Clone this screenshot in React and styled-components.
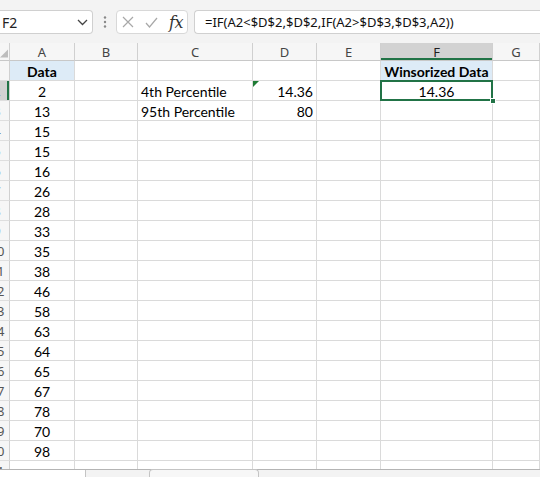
import React from "react";
import styled, { createGlobalStyle } from "styled-components";

const Global = createGlobalStyle`
  html, body { margin: 0; padding: 0; background: #f3f3f3; }
  * { box-sizing: border-box; }
`;

const Page = styled.div`
  width: 540px;
  height: 477px;
  overflow: hidden;
  display: flex;
  flex-direction: column;
  background: #f3f3f3;
`;

const FormulaBar = styled.div`
  height: 43px;
  flex: none;
  display: flex;
  align-items: center;
  gap: 0;
  padding-top: 1px;
`;

const NameBox = styled.div`
  width: 93px;
  height: 24px;
  background: #fff;
  border: 1px solid #d0d0d0;
  border-left: none;
  border-radius: 0 4px 4px 0;
  display: flex;
  align-items: center;
  justify-content: space-between;
  padding: 0 4px 0 2px;
  font-family: "Noto Sans", "Open Sans", sans-serif;
  font-size: 14px;
  color: #222;
`;

const Dots = styled.div`
  width: 23px;
  display: flex;
  justify-content: center;
`;

const IconBox = styled.div`
  width: 72px;
  height: 24px;
  background: #fff;
  border: 1px solid #d8d8d8;
  border-radius: 4px;
  display: flex;
  align-items: center;
  padding-left: 5px;
  gap: 11px;
`;

const Fx = styled.span`
  font-family: "DejaVu Serif", "Liberation Serif", serif;
  font-style: italic;
  font-size: 16px;
  color: #333;
  letter-spacing: -0.5px;
`;

const FormulaInput = styled.div`
  flex: 1;
  height: 24px;
  margin-left: 6px;
  background: #fff;
  border: 1px solid #d0d0d0;
  border-right: none;
  border-radius: 4px 0 0 4px;
  display: flex;
  align-items: center;
  padding-left: 10px;
  font-family: "Noto Sans", "Open Sans", sans-serif;
  font-size: 13px;
  color: #111;
  white-space: nowrap;
  overflow: hidden;
`;

const Sheet = styled.div`
  flex: 1;
  overflow: hidden;
  display: grid;
  grid-template-columns: 10px 65px 63px 115px 64px 64px 112px 1fr;
  grid-template-rows: 18px repeat(21, 20px);
  background: #fff;
`;

const Corner = styled.div`
  background: #f6f6f6;
  border-right: 1px solid #d0d0d0;
  border-bottom: 1px solid #c8c8c8;
  overflow: hidden;
  display: flex;
  align-items: flex-end;
  justify-content: flex-end;
  padding: 0 1px 2px 0;
`;

const ColHead = styled.div`
  background: ${(p) => (p.$active ? "#d2d2d2" : "#f6f6f6")};
  border-right: 1px solid #d0d0d0;
  border-bottom: 1px solid #c8c8c8;
  box-shadow: ${(p) => (p.$active ? "inset 0 -2px 0 #217346" : "none")};
  display: flex;
  align-items: center;
  justify-content: center;
  font-family: "Noto Sans", "Open Sans", sans-serif;
  font-size: 13px;
  color: ${(p) => (p.$active ? "#1e1e1e" : "#444")};
`;

const RowHead = styled.div`
  background: ${(p) => (p.$active ? "#d2d2d2" : "#f6f6f6")};
  border-right: 1px solid #d0d0d0;
  border-bottom: 1px solid #dedede;
  box-shadow: ${(p) => (p.$active ? "inset -2px 0 0 #217346" : "none")};
  overflow: hidden;
  display: flex;
  justify-content: flex-end;
  align-items: center;
`;

const RowNum = styled.span`
  flex: none;
  width: 24px;
  text-align: center;
  font-family: "Noto Sans", "Open Sans", sans-serif;
  font-size: 13px;
  color: #555;
`;

const Cell = styled.div`
  position: relative;
  z-index: ${(p) => (p.$selected ? 2 : 0)};
  background: ${(p) => (p.$fill ? "#ddebf7" : "#fff")};
  border-right: 1px solid #dadada;
  border-bottom: 1px solid #dadada;
  display: flex;
  align-items: center;
  justify-content: ${(p) =>
    p.$align === "left" ? "flex-start" : p.$align === "right" ? "flex-end" : "center"};
  padding: 1px 3px 0 3px;
  font-family: Lato, "Liberation Sans", sans-serif;
  font-size: 14px;
  font-weight: ${(p) => (p.$bold ? 700 : 400)};
  color: #000;
  white-space: nowrap;

  ${(p) =>
    p.$flag &&
    `&::before {
      content: "";
      position: absolute;
      left: 0;
      top: 0;
      border-top: 6px solid #1e7b34;
      border-right: 6px solid transparent;
    }`}

  ${(p) =>
    p.$selected &&
    `&::after {
      content: "";
      position: absolute;
      left: -1px;
      top: -1px;
      right: -1px;
      bottom: -1px;
      border: 2px solid #217346;
    }`}
`;

const FillHandle = styled.span`
  position: absolute;
  right: -4px;
  bottom: -4px;
  width: 6px;
  height: 6px;
  background: #217346;
  border: 1px solid #fff;
  z-index: 3;
`;

const TabBar = styled.div`
  height: 8px;
  flex: none;
  border-top: 1px solid #b4b4b4;
  background: #f3f3f3;
  display: flex;
  align-items: flex-start;
`;

const Tab = styled.div`
  width: 86px;
  height: 8px;
  background: #fff;
  border-right: 1px solid #c4c4c4;
`;

const AddBox = styled.div`
  margin-left: 63px;
  width: 110px;
  height: 9px;
  margin-top: -1px;
  border: 1px solid #c4c4c4;
  border-bottom: none;
  border-radius: 4px 4px 0 0;
  background: #f7f7f7;
  padding-left: 37px;
  padding-top: 4px;
`;

const cols = ["A", "B", "C", "D", "E", "F", "G"];
const align = { A: "center", B: "left", C: "left", D: "right", E: "left", F: "center", G: "left" };
const aValues = [2, 13, 15, 15, 16, 26, 28, 33, 35, 38, 46, 58, 63, 64, 65, 67, 78, 70, 98];

const rows = [];
for (let r = 1; r <= 21; r++) {
  const cells = {};
  if (r === 1) {
    cells.A = { text: "Data", bold: true, fill: true };
    cells.F = { text: "Winsorized Data", bold: true, fill: true };
  } else if (r <= 20) {
    cells.A = { text: String(aValues[r - 2]) };
  }
  if (r === 2) {
    cells.C = { text: "4th Percentile" };
    cells.D = { text: "14.36", flag: true };
    cells.F = { text: "14.36", selected: true };
  }
  if (r === 3) {
    cells.C = { text: "95th Percentile" };
    cells.D = { text: "80" };
  }
  rows.push({ n: r, cells });
}

const Chevron = () => (
  <svg width="11" height="7" viewBox="0 0 11 7">
    <polyline points="1,1 5.5,5.5 10,1" fill="none" stroke="#444" strokeWidth="1.3" />
  </svg>
);

const VDots = () => (
  <svg width="4" height="12" viewBox="0 0 4 12">
    <circle cx="2" cy="1.5" r="1.2" fill="#888" />
    <circle cx="2" cy="6" r="1.2" fill="#888" />
    <circle cx="2" cy="10.5" r="1.2" fill="#888" />
  </svg>
);

const XIcon = () => (
  <svg width="12" height="12" viewBox="0 0 12 12">
    <path d="M1 1 L11 11 M11 1 L1 11" stroke="#a8a8a8" strokeWidth="1.2" fill="none" />
  </svg>
);

const CheckIcon = () => (
  <svg width="13" height="11" viewBox="0 0 13 11">
    <polyline points="1,6 4.5,10 12,1" stroke="#a8a8a8" strokeWidth="1.2" fill="none" />
  </svg>
);

const SelectAll = () => (
  <svg width="9" height="9" viewBox="0 0 9 9">
    <polygon points="9,0 9,9 0,9" fill="#bdbdbd" />
  </svg>
);

export default function App() {
  return (
    <>
      <Global />
      <Page>
        <FormulaBar>
          <NameBox>
            <span>F2</span>
            <Chevron />
          </NameBox>
          <Dots>
            <VDots />
          </Dots>
          <IconBox>
            <XIcon />
            <CheckIcon />
            <Fx>fx</Fx>
          </IconBox>
          <FormulaInput>=IF(A2&lt;$D$2,$D$2,IF(A2&gt;$D$3,$D$3,A2))</FormulaInput>
        </FormulaBar>
        <Sheet>
          <Corner>
            <SelectAll />
          </Corner>
          {cols.map((c) => (
            <ColHead key={c} $active={c === "F"}>
              {c}
            </ColHead>
          ))}
          {rows.map((row) => (
            <React.Fragment key={row.n}>
              <RowHead $active={row.n === 2}>
                <RowNum>{row.n}</RowNum>
              </RowHead>
              {cols.map((c) => {
                const cell = row.cells[c] || {};
                return (
                  <Cell
                    key={c}
                    $align={align[c]}
                    $bold={cell.bold}
                    $fill={cell.fill}
                    $flag={cell.flag}
                    $selected={cell.selected}
                  >
                    {cell.text}
                    {cell.selected && <FillHandle />}
                  </Cell>
                );
              })}
            </React.Fragment>
          ))}
        </Sheet>
        <TabBar>
          <Tab />
          <AddBox>
            <svg width="12" height="8" viewBox="0 0 12 8">
              <circle cx="6" cy="6" r="5" fill="none" stroke="#888" strokeWidth="1" />
            </svg>
          </AddBox>
        </TabBar>
      </Page>
    </>
  );
}
